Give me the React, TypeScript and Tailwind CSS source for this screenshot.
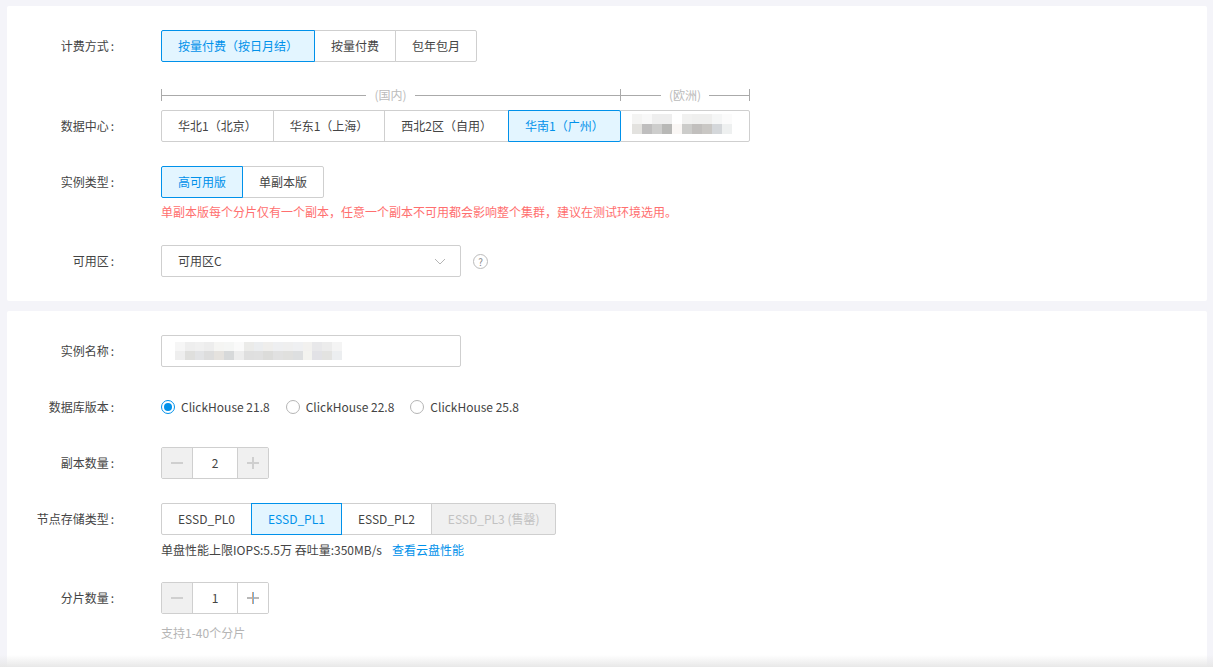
const FONT = "font-['Noto_Sans_CJK_SC','Noto_Sans',sans-serif]";

const dcTop = ['#f4f4f3', '#f8f8f8', '#eeeeee', '#eeeeee', '#ffffff', '#f1f1f0', '#efefee', '#efefee', '#f5f6f6', '#fbfbfb'];
const dcBottom = ['#e3e2df', '#bfbebe', '#cdcdcc', '#b8b8b6', '#faf7f5', '#ccccca', '#c1bfbd', '#c9c7c4', '#d4d7da', '#eef0f0'];
const nameTop = ['#f6f6f6', '#eeeeee', '#f0f0f0', '#ededed', '#f5f5f3', '#f5f6f5', '#fafafa', '#ebebe9', '#ebedef', '#efeeec', '#eeeff1', '#efefef', '#eff0f2', '#f2f1ef', '#e8e8ea', '#ececec', '#f4f4f4'];
const nameBottom = ['#eeeeee', '#dfdfdd', '#e2e3e5', '#dddddd', '#e5e2de', '#d7d9da', '#ededed', '#dfdfdf', '#e0e0e0', '#dcdcda', '#e1e1e1', '#e0e0de', '#dddfe0', '#f3f3ef', '#e2e2e6', '#e3e3e1', '#eceef0'];

function Mosaic({ top, bottom, rowH, cellW }: { top: string[]; bottom: string[]; rowH: string; cellW: string }) {
  return (
    <div className="flex flex-col">
      {[top, bottom].map((row, i) => (
        <div key={i} className={`flex ${rowH}`}>
          {row.map((c, j) => (
            <div key={j} className={cellW} style={{ backgroundColor: c }} />
          ))}
        </div>
      ))}
    </div>
  );
}

function Row({ label, children, className = '' }: { label: string; children: React.ReactNode; className?: string }) {
  return (
    <div className={`flex ${className}`}>
      <div className="w-[107px] mr-[47px] h-8 leading-8 text-right text-[#444] shrink-0">
        {label}
        <span className="ml-0.5">:</span>
      </div>
      <div className="flex-1">{children}</div>
    </div>
  );
}

function Segments({ items, active, disabled }: { items: string[]; active: string; disabled?: string }) {
  return (
    <div className="flex h-8">
      {items.map((item, i) => {
        const isActive = item === active;
        const isDisabled = item === disabled;
        return (
          <div
            key={item}
            className={`pl-4 leading-[30px] border whitespace-nowrap ${isDisabled ? 'pr-[15px]' : 'pr-4'} ${i > 0 ? '-ml-px' : ''} ${i === 0 ? 'rounded-l-[2px]' : ''} ${i === items.length - 1 ? 'rounded-r-[2px]' : ''} ${
              isActive
                ? 'relative z-10 border-[#0091ea] bg-[#e3f5ff] text-[#0091ea]'
                : isDisabled
                  ? 'border-[#cfcfcf] bg-[#f0f0f0] text-[#c2c2c2]'
                  : 'border-[#cfcfcf] bg-white text-[#444]'
            }`}
          >
            {item}
          </div>
        );
      })}
    </div>
  );
}

function Stepper({ value, plusActive }: { value: string; plusActive?: boolean }) {
  return (
    <div className="flex h-8 w-[108px] border border-[#cfcfcf] rounded-[2px] overflow-hidden">
      <div className="w-[31px] bg-[#f0f0f0] border-r border-[#cfcfcf] flex items-center justify-center">
        <svg width="12" height="12" viewBox="0 0 12 12"><path d="M0 6h12" stroke="#cfcfcf" strokeWidth="2" /></svg>
      </div>
      <div className="flex-1 text-center leading-[30px] text-[#444]">{value}</div>
      <div className={`w-[31px] border-l border-[#cfcfcf] flex items-center justify-center ${plusActive ? 'bg-white' : 'bg-[#f0f0f0]'}`}>
        <svg width="12" height="12" viewBox="0 0 12 12">
          <path d="M0 6h12" stroke={plusActive ? '#b8b8b8' : '#cfcfcf'} strokeWidth="2" />
          {plusActive ? (
            <>
              <path d="M5.5 0v12" stroke="#e0a878" strokeWidth="1" />
              <path d="M6.5 0v12" stroke="#74b0e8" strokeWidth="1" />
            </>
          ) : (
            <path d="M6 0v12" stroke="#cfcfcf" strokeWidth="2" />
          )}
        </svg>
      </div>
    </div>
  );
}

function Radio({ label, checked }: { label: string; checked?: boolean }) {
  return (
    <div className="flex items-center gap-[6px]">
      <div className={`w-[14px] h-[14px] rounded-full border flex items-center justify-center ${checked ? 'border-[#0091ea]' : 'border-[#b5b5b5]'}`}>
        {checked && <div className="w-2 h-2 rounded-full bg-[#0091ea]" />}
      </div>
      <span className="text-[#444]">{label}</span>
    </div>
  );
}

function Bracket({ label, className, leftTick, rightTick }: { label: string; className: string; leftTick?: boolean; rightTick?: boolean }) {
  return (
    <div className={`flex items-center h-[14px] ${className}`}>
      {leftTick && <div className="w-px -mr-px h-[12px] bg-[#aaaaaa]" />}
      <div className="flex-1 h-px bg-[#aaaaaa]" />
      <span className="px-2 text-[#bbbbbb] leading-[14px]">{label}</span>
      <div className="flex-1 h-px bg-[#aaaaaa]" />
      {rightTick && <div className="w-px -ml-px h-[12px] bg-[#aaaaaa]" />}
    </div>
  );
}

export default function App() {
  return (
    <div className={`${FONT} relative h-screen overflow-hidden bg-[#f4f4f9] pl-[7px] pr-[6px] pt-[6px] text-xs`}>
      <section className="bg-white rounded-[2px] pt-6 pb-6 h-[295px]">
        <Row label="计费方式">
          <Segments items={['按量付费（按日月结）', '按量付费', '包年包月']} active="按量付费（按日月结）" />
        </Row>

        <div className="flex ml-[154px] w-[589px] mt-[26px] mb-2">
          <Bracket label="(国内)" className="w-[459px]" leftTick />
          <Bracket label="(欧洲)" className="w-[130px]" leftTick rightTick />
        </div>
        <Row label="数据中心" className="mb-6">
          <div className="flex h-8">
            <Segments items={['华北1（北京）', '华东1（上海）', '西北2区（自用）', '华南1（广州）']} active="华南1（广州）" />
            <div className="-ml-px w-[130px] border border-[#cfcfcf] rounded-r-[2px] pl-[11px] pt-[3px]">
              <Mosaic top={dcTop} bottom={dcBottom} rowH="h-[10px]" cellW="w-[10px]" />
            </div>
          </div>
        </Row>

        <Row label="实例类型" className="mb-[6px]">
          <Segments items={['高可用版', '单副本版']} active="高可用版" />
          <p className="mt-[6px] leading-[16px] text-[#ff6f6f]">单副本版每个分片仅有一个副本，任意一个副本不可用都会影响整个集群，建议在测试环境选用。</p>
        </Row>

        <Row label="可用区" className="mt-[25px]">
          <div className="flex items-center">
            <div className="flex items-center justify-between w-[300px] h-8 border border-[#cfcfcf] rounded-[2px] pl-4 pr-[14px] text-[#444]">
              <span>可用区C</span>
              <svg width="12" height="7" viewBox="0 0 12 7" fill="none"><path d="M1 1l5 5 5-5" stroke="#b5b5b5" strokeWidth="1" /></svg>
            </div>
            <div className="ml-3 w-[15px] h-[15px] rounded-full border border-[#bbbbbb] text-[#888888] text-[10px] leading-[13px] text-center">?</div>
          </div>
        </Row>
      </section>

      <section className="bg-white rounded-[2px] mt-[10px] pt-6 h-[400px]">
        <Row label="实例名称" className="mb-6">
          <div className="w-[300px] h-8 border border-[#cfcfcf] rounded-[2px] pl-[13px] pt-[6px]">
            <Mosaic top={nameTop} bottom={nameBottom} rowH="h-[9px]" cellW="w-[9.82px]" />
          </div>
        </Row>
        <Row label="数据库版本" className="mb-6">
          <div className="flex items-center gap-4 h-8">
            <Radio label="ClickHouse 21.8" checked />
            <Radio label="ClickHouse 22.8" />
            <Radio label="ClickHouse 25.8" />
          </div>
        </Row>
        <Row label="副本数量" className="mb-6">
          <Stepper value="2" />
        </Row>
        <Row label="节点存储类型" className="mb-[23px]">
          <Segments items={['ESSD_PL0', 'ESSD_PL1', 'ESSD_PL2', 'ESSD_PL3 (售罄)']} active="ESSD_PL1" disabled="ESSD_PL3 (售罄)" />
          <p className="mt-[6px] leading-[18px] text-[#444] h-[18px]">
            单盘性能上限IOPS:5.5万 吞吐量:350MB/s<span className="ml-[10px] text-[#0091ea]">查看云盘性能</span>
          </p>
        </Row>
        <Row label="分片数量">
          <Stepper value="1" plusActive />
          <p className="mt-[10px] leading-[18px] text-[#b5b5b5]">支持1-40个分片</p>
        </Row>
      </section>

      <div className="absolute left-0 right-0 bottom-0 h-3 bg-gradient-to-b from-transparent to-[#e8e8e8]" />
    </div>
  );
}
